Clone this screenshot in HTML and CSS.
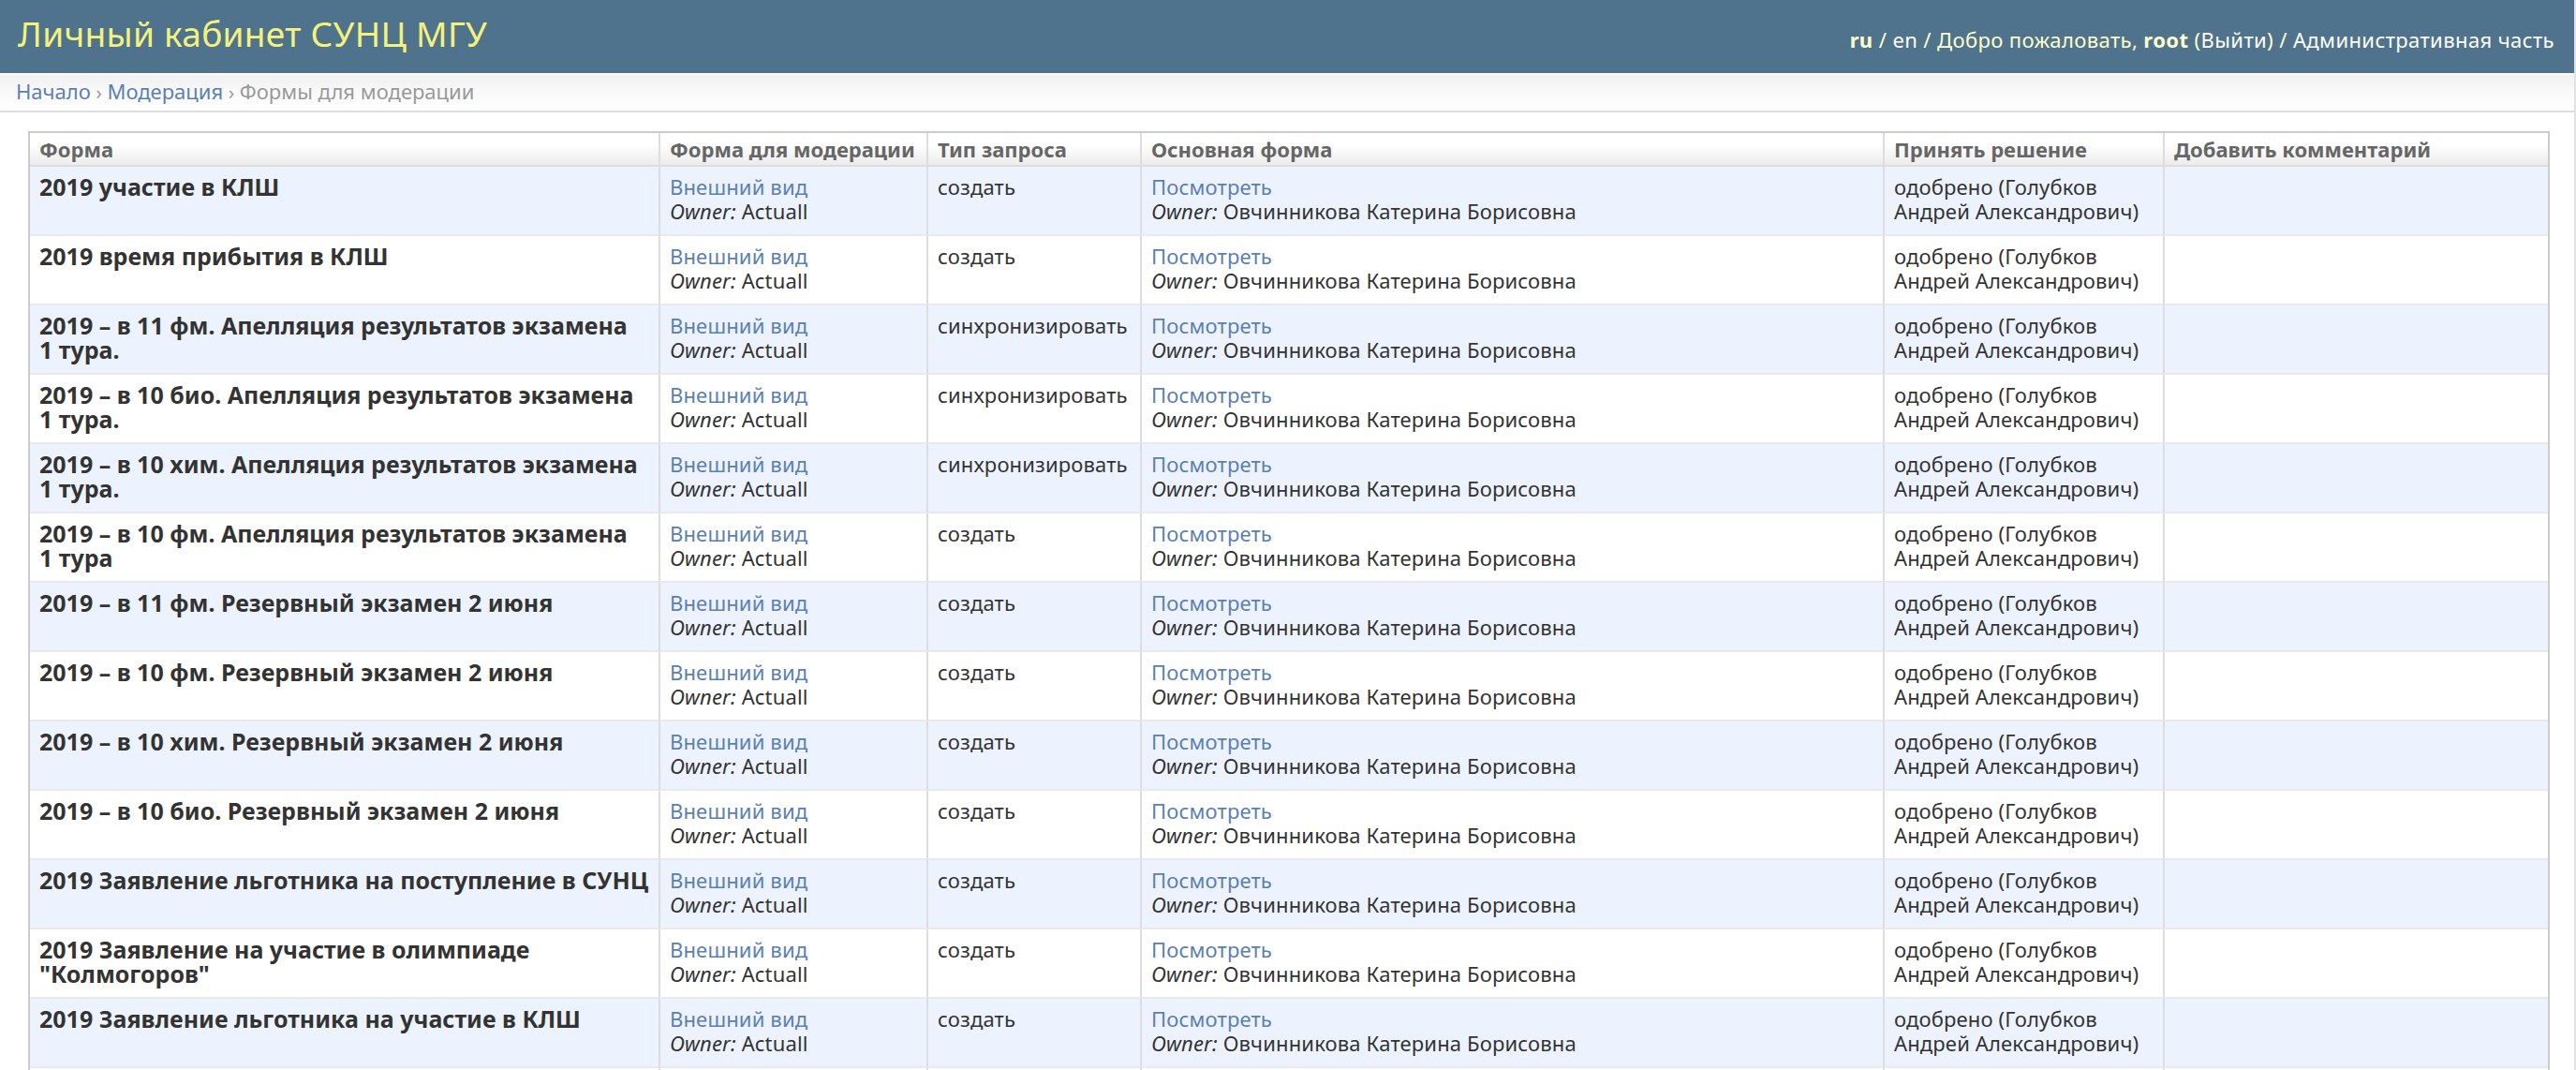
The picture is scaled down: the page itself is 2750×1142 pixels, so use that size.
FILE: index.html
```html
<!DOCTYPE html>
<html lang="ru">
<head>
<meta charset="utf-8">
<title>Формы для модерации</title>
<link rel="stylesheet" href="styles.css">
</head>
<body>
<div class="page">
  <header class="header">
    <h1 class="branding">Личный кабинет СУНЦ МГУ</h1>
    <div class="user-tools">
      <strong class="cur">ru</strong> / <a href="#">en</a> / Добро пожаловать, <strong>root</strong> (<a href="#">Выйти</a>) / <a href="#">Административная часть</a>
    </div>
  </header>
  <nav class="breadcrumbs">
    <a href="#">Начало</a> <span class="sep">›</span> <a href="#">Модерация</a> <span class="sep">›</span> Формы для модерации
  </nav>
  <main class="content">
    <table class="results">
      <thead>
        <tr>
          <th class="c1">Форма</th>
          <th class="c2">Форма для модерации</th>
          <th class="c3">Тип запроса</th>
          <th class="c4">Основная форма</th>
          <th class="c5">Принять решение</th>
          <th class="c6">Добавить комментарий</th>
        </tr>
      </thead>
      <tbody>
        <tr class="row1">
          <td class="title">2019 участие в КЛШ</td>
          <td><a href="#">Внешний вид</a><br><em>Owner:</em> Actuall</td>
          <td>создать</td>
          <td><a href="#">Посмотреть</a><br><em>Owner:</em> Овчинникова Катерина Борисовна</td>
          <td>одобрено (Голубков Андрей Александрович)</td>
          <td></td>
        </tr>
        <tr class="row2">
          <td class="title">2019 время прибытия в КЛШ</td>
          <td><a href="#">Внешний вид</a><br><em>Owner:</em> Actuall</td>
          <td>создать</td>
          <td><a href="#">Посмотреть</a><br><em>Owner:</em> Овчинникова Катерина Борисовна</td>
          <td>одобрено (Голубков Андрей Александрович)</td>
          <td></td>
        </tr>
        <tr class="row1">
          <td class="title">2019 – в 11 фм. Апелляция результатов экзамена 1&nbsp;тура.</td>
          <td><a href="#">Внешний вид</a><br><em>Owner:</em> Actuall</td>
          <td>синхронизировать</td>
          <td><a href="#">Посмотреть</a><br><em>Owner:</em> Овчинникова Катерина Борисовна</td>
          <td>одобрено (Голубков Андрей Александрович)</td>
          <td></td>
        </tr>
        <tr class="row2">
          <td class="title">2019 – в 10 био. Апелляция результатов экзамена 1&nbsp;тура.</td>
          <td><a href="#">Внешний вид</a><br><em>Owner:</em> Actuall</td>
          <td>синхронизировать</td>
          <td><a href="#">Посмотреть</a><br><em>Owner:</em> Овчинникова Катерина Борисовна</td>
          <td>одобрено (Голубков Андрей Александрович)</td>
          <td></td>
        </tr>
        <tr class="row1">
          <td class="title">2019 – в 10 хим. Апелляция результатов экзамена 1&nbsp;тура.</td>
          <td><a href="#">Внешний вид</a><br><em>Owner:</em> Actuall</td>
          <td>синхронизировать</td>
          <td><a href="#">Посмотреть</a><br><em>Owner:</em> Овчинникова Катерина Борисовна</td>
          <td>одобрено (Голубков Андрей Александрович)</td>
          <td></td>
        </tr>
        <tr class="row2">
          <td class="title">2019 – в 10 фм. Апелляция результатов экзамена 1&nbsp;тура</td>
          <td><a href="#">Внешний вид</a><br><em>Owner:</em> Actuall</td>
          <td>создать</td>
          <td><a href="#">Посмотреть</a><br><em>Owner:</em> Овчинникова Катерина Борисовна</td>
          <td>одобрено (Голубков Андрей Александрович)</td>
          <td></td>
        </tr>
        <tr class="row1">
          <td class="title">2019 – в 11 фм. Резервный экзамен 2 июня</td>
          <td><a href="#">Внешний вид</a><br><em>Owner:</em> Actuall</td>
          <td>создать</td>
          <td><a href="#">Посмотреть</a><br><em>Owner:</em> Овчинникова Катерина Борисовна</td>
          <td>одобрено (Голубков Андрей Александрович)</td>
          <td></td>
        </tr>
        <tr class="row2">
          <td class="title">2019 – в 10 фм. Резервный экзамен 2 июня</td>
          <td><a href="#">Внешний вид</a><br><em>Owner:</em> Actuall</td>
          <td>создать</td>
          <td><a href="#">Посмотреть</a><br><em>Owner:</em> Овчинникова Катерина Борисовна</td>
          <td>одобрено (Голубков Андрей Александрович)</td>
          <td></td>
        </tr>
        <tr class="row1">
          <td class="title">2019 – в 10 хим. Резервный экзамен 2 июня</td>
          <td><a href="#">Внешний вид</a><br><em>Owner:</em> Actuall</td>
          <td>создать</td>
          <td><a href="#">Посмотреть</a><br><em>Owner:</em> Овчинникова Катерина Борисовна</td>
          <td>одобрено (Голубков Андрей Александрович)</td>
          <td></td>
        </tr>
        <tr class="row2">
          <td class="title">2019 – в 10 био. Резервный экзамен 2 июня</td>
          <td><a href="#">Внешний вид</a><br><em>Owner:</em> Actuall</td>
          <td>создать</td>
          <td><a href="#">Посмотреть</a><br><em>Owner:</em> Овчинникова Катерина Борисовна</td>
          <td>одобрено (Голубков Андрей Александрович)</td>
          <td></td>
        </tr>
        <tr class="row1">
          <td class="title">2019 Заявление льготника на поступление в СУНЦ</td>
          <td><a href="#">Внешний вид</a><br><em>Owner:</em> Actuall</td>
          <td>создать</td>
          <td><a href="#">Посмотреть</a><br><em>Owner:</em> Овчинникова Катерина Борисовна</td>
          <td>одобрено (Голубков Андрей Александрович)</td>
          <td></td>
        </tr>
        <tr class="row2">
          <td class="title">2019 Заявление на участие в олимпиаде "Колмогоров"</td>
          <td><a href="#">Внешний вид</a><br><em>Owner:</em> Actuall</td>
          <td>создать</td>
          <td><a href="#">Посмотреть</a><br><em>Owner:</em> Овчинникова Катерина Борисовна</td>
          <td>одобрено (Голубков Андрей Александрович)</td>
          <td></td>
        </tr>
        <tr class="row1">
          <td class="title">2019 Заявление льготника на участие в КЛШ</td>
          <td><a href="#">Внешний вид</a><br><em>Owner:</em> Actuall</td>
          <td>создать</td>
          <td><a href="#">Посмотреть</a><br><em>Owner:</em> Овчинникова Катерина Борисовна</td>
          <td>одобрено (Голубков Андрей Александрович)</td>
          <td></td>
        </tr>
        <tr class="row2">
          <td class="title"></td>
          <td></td>
          <td></td>
          <td></td>
          <td></td>
          <td></td>
        </tr>
      </tbody>
    </table>
  </main>
</div>
</body>
</html>
```
FILE: styles.css
```css
html, body {
  margin: 0;
  padding: 0;
  background: #fff;
}
body {
  font-family: "Noto Sans", "Open Sans", "DejaVu Sans", sans-serif;
  font-size: 22px;
  color: #333;
  overflow: hidden;
}
.page {
  border-right: 2px solid #e2e2e2;
  min-height: 1142px;
}
a {
  color: #5b80b2;
  text-decoration: none;
}
.header {
  height: 78px;
  background: #4f738d;
  display: flex;
  align-items: center;
  justify-content: space-between;
  padding: 0 21px 0 19px;
  box-sizing: border-box;
}
.branding {
  margin: 0;
  font-weight: normal;
  font-size: 37px;
  line-height: 44px;
  letter-spacing: 0.3px;
  color: #f4f27c;
  margin-top: -6px;
}
.user-tools {
  font-size: 22px;
  line-height: 26px;
  letter-spacing: 0.4px;
  color: #ffc;
  margin-top: 6px;
}
.user-tools a {
  color: #fff;
}
.user-tools strong {
  font-weight: bold;
}
.breadcrumbs {
  border-top: 2px solid #fff;
  border-bottom: 2px solid #ddd;
  background: linear-gradient(#f1f1f1, #fbfbfb 60%, #fff);
  padding: 4px 17px 6px;
  line-height: 26px;
  font-size: 22px;
  color: #999;
}
.breadcrumbs .sep {
  color: #999;
  font-size: 20px;
}
.content {
  padding: 20px 26px 0 30px;
}
.results {
  width: 100%;
  table-layout: fixed;
  border-collapse: separate;
  border-spacing: 0;
  border: 2px solid #ccc;
  border-bottom: 0;
}
.results th,
.results td {
  box-sizing: border-box;
  text-align: left;
  vertical-align: top;
  border-left: 2px solid #ddd;
}
.results th:first-child,
.results td:first-child {
  border-left: 0;
}
.results th {
  background: linear-gradient(#fff 35%, #ececec);
  color: #666;
  font-weight: bold;
  line-height: 26px;
  padding: 4px 10px;
  border-bottom: 2px solid #ddd;
  white-space: nowrap;
  overflow: hidden;
}
.c1 { width: 671px; }
.c2 { width: 286px; }
.c3 { width: 228px; }
.c4 { width: 793px; }
.c5 { width: 299px; }
.c6 { width: 411px; }
.results td {
  line-height: 26px;
  padding: 8px 10px 12px 10px;
  border-bottom: 2px solid #eaeaea;
  height: 74px;
  letter-spacing: 0.15px;
}
.results td.title {
  font-weight: bold;
  font-size: 25px;
  padding-top: 8px;
  padding-right: 10px;
  letter-spacing: 0;
}
.results td em {
  font-style: italic;
}
.row1 td {
  background: #edf3fe;
}
.row2 td {
  background: #fff;
}
```
